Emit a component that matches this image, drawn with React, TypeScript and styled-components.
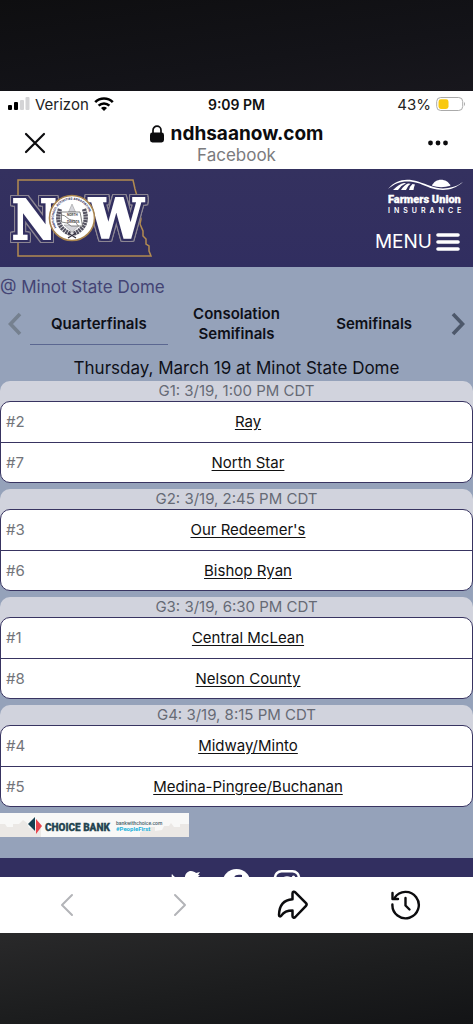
import React from 'react';
import styled, { createGlobalStyle } from 'styled-components';

const GlobalStyle = createGlobalStyle`
  * { box-sizing: border-box; }
  body { margin: 0; background: #17181a; font-family: Inter, "Liberation Sans", sans-serif; }
  button { border: 0; padding: 0; background: none; font: inherit; color: inherit; cursor: pointer; }
  svg { display: block; flex: none; }
`;

const Screen = styled.div`
  display: flex;
  flex-direction: column;
  height: 100vh;
`;

const Band = styled.div<{ $bottom?: boolean }>`
  flex: none;
  height: 91px;
  background: ${p => (p.$bottom ? 'linear-gradient(172deg, #29292a, #1c1d1e 55%, #131416)' : 'linear-gradient(172deg, #0e0e10, #131318 60%, #18171d)')};
`;

const StatusBar = styled.div`
  display: grid;
  grid-template-columns: 1fr auto 1fr;
  align-items: center;
  flex: none;
  height: 26px;
  padding: 0 8px;
  background: #fff;
  color: #222;
  font-size: 15px;
`;

const StatusGroup = styled.div<{ $end?: boolean }>`
  display: flex;
  align-items: center;
  justify-content: ${p => (p.$end ? 'flex-end' : 'flex-start')};
  gap: 5px;
`;

const Clock = styled.div`
  font-weight: 600;
  font-size: 14px;
  color: #111;
`;

const AddressBar = styled.div`
  display: grid;
  grid-template-columns: 70px 1fr 70px;
  align-items: center;
  flex: none;
  height: 52px;
  background: #fff;
  color: #0c0c0e;
`;

const BarButton = styled.button`
  display: flex;
  justify-content: center;
  align-items: center;
  height: 44px;
`;

const Address = styled.div`
  display: flex;
  flex-direction: column;
  align-items: center;
`;

const Host = styled.div`
  display: flex;
  align-items: center;
  gap: 7px;
  font-size: 19px;
  line-height: 24px;
  font-weight: 700;
`;

const Source = styled.div`
  font-size: 17px;
  line-height: 18px;
  color: #7b7b7e;
`;

const WebView = styled.div`
  flex: 1;
  min-height: 0;
  overflow: hidden;
  background: #95a2ba;
`;

const SiteHeader = styled.header`
  display: flex;
  justify-content: space-between;
  height: 98px;
  padding-right: 8px;
  background: linear-gradient(#34315f, #312e60);
`;

const HeaderSide = styled.div`
  display: flex;
  flex-direction: column;
  align-items: flex-end;
  gap: 15px;
  padding-top: 8px;
`;

const MenuButton = styled.button`
  display: flex;
  align-items: center;
  gap: 4px;
  margin-right: 5px;
  color: #fff;
  font-size: 19px;
  line-height: 24px;
`;

const Venue = styled.div`
  padding-top: 8px;
  font-size: 17px;
  line-height: 24px;
  color: #444474;
`;

const Rounds = styled.nav`
  display: grid;
  grid-template-columns: 30px repeat(3, 1fr) 30px;
  align-items: center;
  height: 46px;
  margin-top: 2px;
`;

const RoundTab = styled.button<{ $active?: boolean }>`
  height: 42px;
  border-bottom: 1px solid ${p => (p.$active ? '#5b6791' : 'transparent')};
  color: #0e1018;
  font-size: 15px;
  line-height: 20px;
  font-weight: 600;
`;

const Arrow = styled.button`
  display: flex;
  justify-content: center;
`;

const DateLine = styled.h2`
  margin: 9px 0 1px;
  font-size: 17px;
  line-height: 24px;
  font-weight: 400;
  text-align: center;
  color: #0e1018;
`;

const Game = styled.section`
  margin-bottom: 6px;
  border-radius: 10px 10px 12px 12px;
  background: linear-gradient(#d1d3dd 50%, transparent 50%);
`;

const GameTime = styled.h3`
  margin: 0;
  font-size: 15px;
  line-height: 20px;
  font-weight: 400;
  text-align: center;
  color: #666a75;
`;

const Teams = styled.div`
  border: 1px solid #383461;
  border-radius: 10px;
  background: #fff;
  overflow: hidden;
`;

const Team = styled.div`
  display: grid;
  grid-template-columns: 24px 1fr;
  align-items: center;
  height: 40px;
  padding: 0 6px 2px 5px;
  font-size: 15px;
  & + & { border-top: 1px solid #383461; padding-bottom: 0; }
`;

const Seed = styled.span`
  color: #72747a;
`;

const TeamLink = styled.a`
  justify-self: center;
  color: #111;
  text-decoration: underline;
  text-underline-offset: 2px;
`;

const Sponsor = styled.a`
  display: block;
  width: 189px;
`;

const SiteFooter = styled.footer`
  display: flex;
  justify-content: center;
  gap: 22px;
  margin-top: 21px;
  padding: 11px 0 20px;
  background: #322f60;
  color: #fff;
`;

const SocialLink = styled.a`
  color: inherit;
`;

const BottomBar = styled.nav`
  display: grid;
  grid-template-columns: repeat(4, 1fr);
  align-items: center;
  flex: none;
  height: 56px;
  padding: 0 11px;
  background: #fff;
  color: #0c0c0e;
`;

const LogoLetters = styled.g`
  filter: drop-shadow(2px 0 0 #322f60) drop-shadow(-2px 0 0 #322f60) drop-shadow(0 2px 0 #322f60) drop-shadow(0 -2px 0 #322f60)
    drop-shadow(1px 0 0 #8c8693) drop-shadow(-1px 0 0 #8c8693) drop-shadow(0 1px 0 #8c8693) drop-shadow(0 -1px 0 #8c8693);
  font-family: "DejaVu Serif Condensed", "DejaVu Serif", serif;
  font-weight: 700;
  font-size: 54px;
  fill: #fff;
  stroke: #fff;
  stroke-width: 2px;
`;

const games = [
  { time: 'G1: 3/19, 1:00 PM CDT', teams: [['#2', 'Ray'], ['#7', 'North Star']] },
  { time: 'G2: 3/19, 2:45 PM CDT', teams: [['#3', "Our Redeemer's"], ['#6', 'Bishop Ryan']] },
  { time: 'G3: 3/19, 6:30 PM CDT', teams: [['#1', 'Central McLean'], ['#8', 'Nelson County']] },
  { time: 'G4: 3/19, 8:15 PM CDT', teams: [['#4', 'Midway/Minto'], ['#5', 'Medina-Pingree/Buchanan']] },
];

const Signal = () => (
  <svg width="22" height="14" viewBox="0 0 22 14">
    <rect x="0" y="8" width="4" height="5" rx="1" fill="#000" />
    <rect x="6" y="5" width="4" height="8" rx="1" fill="#000" />
    <rect x="12" y="3" width="4" height="10" rx="1" fill="#d4d4d6" />
    <rect x="17.5" y="0" width="4" height="13" rx="1" fill="#d4d4d6" />
  </svg>
);

const Wifi = () => (
  <svg width="20" height="14" viewBox="0 0 20 14" fill="none" stroke="#000" strokeWidth="2.6">
    <path d="M1.2 5.1C6.1.3 13.9.3 18.8 5.1" />
    <path d="M4.6 8.6c3.1-2.9 7.7-2.9 10.8 0" />
    <path d="M7 10.9c1.8-1.5 4.2-1.5 6 0L10 13.9z" fill="#000" stroke="none" />
  </svg>
);

const Battery = () => (
  <svg width="29" height="16" viewBox="0 0 29 16">
    <rect x=".7" y="1.5" width="26" height="13" rx="4" fill="#fff" stroke="#aaa" />
    <rect x="2.5" y="3.3" width="10" height="9.6" rx="2.4" fill="#f9c910" />
    <path d="M28 6v4q1-.5 1-2T28 6" fill="#aaa" />
  </svg>
);

const Lock = () => (
  <svg width="14" height="18" viewBox="0 0 14 18">
    <rect x="0" y="7.5" width="14" height="10" rx="2.4" fill="#0c0c0e" />
    <path d="M3 8V5.2a4 4 0 0 1 8 0V8" fill="none" stroke="#0c0c0e" strokeWidth="1.7" />
  </svg>
);

const NowLogo = () => (
  <svg width="160" height="98" viewBox="0 0 160 98" role="img" aria-label="NDHSAA Now">
    <path d="M18 11H133l2 9 2 7 1 12 3 11-1 5 3 7v5l3 3v5l3 2v5l2 5H18z" fill="none" stroke="#b28b50" strokeWidth="1.5" />
    <LogoLetters>
      <text x="12" y="70">N</text>
      <text x="89" y="69">W</text>
    </LogoLetters>
    <circle cx="72" cy="49" r="22.5" fill="#fff" stroke="#aa854f" strokeWidth="1.6" />
    <defs><path id="sealRing" d="M56.5 58.5A18.2 18.2 0 1 1 87.5 58.5" /></defs>
    <text fontFamily="Inter, sans-serif" fontSize="3" fontWeight="800" fill="#34315f">
      <textPath href="#sealRing">HIGH SCHOOL ACTIVITIES ASSOCIATION</textPath>
    </text>
    <g fill="none" stroke="#555362" strokeWidth="4.4" strokeDasharray="2.2 .6">
      <path d="M60 40C55.5 52 60 61 71 65" />
      <path d="M84 40C88.5 52 84 61 73 65" />
    </g>
    <path d="M68 69l8-5M76 69l-8-5" stroke="#33303f" strokeWidth="1.2" />
    <path d="M72 35l3.5 8h-7zM64 56h16l-8 7z" fill="#d4d4da" stroke="#777" strokeWidth=".4" />
    <path d="M61.5 43h18.5l1 5 1.5 9H71l-4-3-5.5-1z" fill="#fff" stroke="#555" strokeWidth=".7" />
    <path d="M61.5 46c5 0 6 5 10 5s4 3 7 6" fill="none" stroke="#555" strokeWidth=".7" />
    <text x="67" y="47" fontFamily="Inter, sans-serif" fontSize="3" fontWeight="700" fill="#444">NORTH</text>
    <text x="67" y="54" fontFamily="Inter, sans-serif" fontSize="3" fontWeight="700" fill="#444">DAKOTA</text>
  </svg>
);

const FarmersLogo = () => (
  <svg width="78" height="38" viewBox="0 0 78 38" fill="#fff" role="img" aria-label="Farmers Union Insurance">
    <path d="M1 12C9 2 20 1 31 4.5S50 13 61 11 72 7 76 5C68 12 60 14 50 12.5S36 6.5 26 5 9 5.5 1 12z" />
    <path d="M6 13q6-6 11-7l2 .3q-5 2-8 6.7zM14 13q3-5 7-6.500l2.500.2q-3 2-4.500 6.300zM22 13q1-4 3.500-6l2.500.6q-1 2-1.500 5.400z" />
    <path d="M45 8.800C48 .8 60 .8 63.500 8.800Q54 11.500 45 8.800z" />
    <text x="1" y="26" fontFamily="Roboto, sans-serif" fontSize="11" fontWeight="900" stroke="#fff" strokeWidth=".3">Farmers Union</text>
    <text x="1" y="36" fontFamily="Inter, sans-serif" fontSize="7" fontWeight="600" letterSpacing="4">INSURANCE</text>
  </svg>
);

const ChoiceBank = () => (
  <svg width="189" height="24" viewBox="0 0 189 24" role="img" aria-label="Choice Bank">
    <rect width="189" height="24" fill="#f8f8f7" />
    <path d="M0 11h5l2 3h6v-3h6l4-4 4 3 2 5h12v9H0z" fill="#ebe8e5" />
    <path d="M140 24v-5l7-2 2-3h6v4l7-1 2-4h5l2-3 3 4h6v-3h9v13z" fill="#ebe8e5" />
    <path d="M35 4v14l-7-7z" fill="#153e50" />
    <path d="M36 6l6 7-6 8z" fill="#e8434c" />
    <text x="45" y="18" fontFamily="Roboto, sans-serif" fontSize="10" fontWeight="900" fill="#244450" stroke="#244450" strokeWidth=".3">CHOICE BANK</text>
    <text x="116" y="12" fontFamily="Roboto, sans-serif" fontSize="5" fontWeight="500" fill="#49616b">bankwithchoice.com</text>
    <text x="116" y="18" fontFamily="Roboto, sans-serif" fontSize="6" fontWeight="700" fill="#19b2dc">#PeopleFirst</text>
  </svg>
);

const Chevron = ({ right, color }: { right?: boolean; color: string }) => (
  <svg width="14" height="24" viewBox="0 0 14 24" fill="none" stroke={color} strokeWidth="3.6">
    <path d={right ? 'M2 2l9.5 10L2 22' : 'M12 2L2.5 12l9.5 10'} />
  </svg>
);

const NavChevron = ({ right }: { right?: boolean }) => (
  <svg width="14" height="24" viewBox="0 0 14 24" fill="none" stroke="#b3b4b8" strokeWidth="2" strokeLinecap="round" strokeLinejoin="round">
    <path d={right ? 'M2 2l10 10L2 22' : 'M12 2L2 12l10 10'} />
  </svg>
);

export default function App() {
  return (
    <Screen>
      <GlobalStyle />
      <Band />
      <StatusBar>
        <StatusGroup><Signal /><span>Verizon</span><Wifi /></StatusGroup>
        <Clock>9:09 PM</Clock>
        <StatusGroup $end><span>43%</span><Battery /></StatusGroup>
      </StatusBar>
      <AddressBar>
        <BarButton aria-label="Close">
          <svg width="22" height="22" viewBox="0 0 22 22" stroke="currentColor" strokeWidth="2.2" strokeLinecap="round"><path d="M2 2l18 18M20 2L2 20" /></svg>
        </BarButton>
        <Address>
          <Host><Lock /><span>ndhsaanow.com</span></Host>
          <Source>Facebook</Source>
        </Address>
        <BarButton aria-label="More">
          <svg width="20" height="6" viewBox="0 0 20 6" fill="currentColor"><circle cx="2.5" cy="3" r="2.4" /><circle cx="10" cy="3" r="2.4" /><circle cx="17.5" cy="3" r="2.4" /></svg>
        </BarButton>
      </AddressBar>
      <WebView>
        <SiteHeader>
          <NowLogo />
          <HeaderSide>
            <FarmersLogo />
            <MenuButton>
              <span>MENU</span>
              <svg width="24" height="18" viewBox="0 0 24 18" stroke="currentColor" strokeWidth="3.6" strokeLinecap="round"><path d="M2 2h20M2 9h20M2 16h20" /></svg>
            </MenuButton>
          </HeaderSide>
        </SiteHeader>
        <main>
          <Venue>@ Minot State Dome</Venue>
          <Rounds>
            <Arrow aria-label="Previous round"><Chevron color="#75808f" /></Arrow>
            <RoundTab $active>Quarterfinals</RoundTab>
            <RoundTab>Consolation Semifinals</RoundTab>
            <RoundTab>Semifinals</RoundTab>
            <Arrow aria-label="Next round"><Chevron right color="#4d586b" /></Arrow>
          </Rounds>
          <DateLine>Thursday, March 19 at Minot State Dome</DateLine>
          {games.map(game => (
            <Game key={game.time}>
              <GameTime>{game.time}</GameTime>
              <Teams>
                {game.teams.map(([seed, name]) => (
                  <Team key={name}><Seed>{seed}</Seed><TeamLink href="#">{name}</TeamLink></Team>
                ))}
              </Teams>
            </Game>
          ))}
          <Sponsor href="#"><ChoiceBank /></Sponsor>
        </main>
        <SiteFooter>
          <SocialLink href="#" aria-label="Twitter">
            <svg width="29" height="29" viewBox="0 0 29 29" fill="currentColor"><path d="M1 5c4 5 8 6 13 6-1-5 2-9 6-9 2 0 4 1 5 2l4-1-2 3 2 0-3 3c0 10-7 17-16 17-4 0-7-1-9-3 3 0 6-1 8-2-3 0-5-2-6-4h3c-3-1-5-3-5-6l3 1C1 10 0 7 1 5z" /></svg>
          </SocialLink>
          <SocialLink href="#" aria-label="Facebook">
            <svg width="29" height="29" viewBox="0 0 29 29"><circle cx="14.5" cy="14" r="14" fill="currentColor" /><path d="M12 29V17H9v-4h3v-3c0-4 3-5 8-4v3c-3 0-4 0-4 2v2h4l-1 4h-3v12z" fill="#322f60" /></svg>
          </SocialLink>
          <SocialLink href="#" aria-label="Instagram">
            <svg width="29" height="29" viewBox="0 0 29 29" fill="none" stroke="currentColor" strokeWidth="2.6"><rect x="2" y="2.3" width="24" height="24" rx="6.5" /><circle cx="14" cy="14.5" r="6" /><circle cx="20.5" cy="8" r="1.6" fill="currentColor" stroke="none" /></svg>
          </SocialLink>
        </SiteFooter>
      </WebView>
      <BottomBar>
        <BarButton aria-label="Back"><NavChevron /></BarButton>
        <BarButton aria-label="Forward"><NavChevron right /></BarButton>
        <BarButton aria-label="Share">
          <svg width="32" height="30" viewBox="0 0 32 30" fill="none" stroke="currentColor" strokeWidth="2.5" strokeLinejoin="round">
            <path d="M15.5 3.4c0-1.8 1.6-2.2 2.8-1L29 13.2q1.2 1.3 0 2.6L18.3 27c-1.3 1.2-2.8.6-2.8-1v-5.5C9 20.5 6.5 22.5 4.5 25.4 3.3 27 2 26.5 2 25 2.2 15.5 7 9.8 15.5 9.2z" />
          </svg>
        </BarButton>
        <BarButton aria-label="History">
          <svg width="32" height="32" viewBox="0 0 32 32" fill="none" stroke="currentColor" strokeWidth="2.4" strokeLinecap="round" strokeLinejoin="round">
            <path d="M2.4 15.5A13.2 13.2 0 1 0 4.6 8.8" /><path d="M2.5 4v6h5.5M15.5 9v7.5l4 4" />
          </svg>
        </BarButton>
      </BottomBar>
      <Band $bottom />
    </Screen>
  );
}
